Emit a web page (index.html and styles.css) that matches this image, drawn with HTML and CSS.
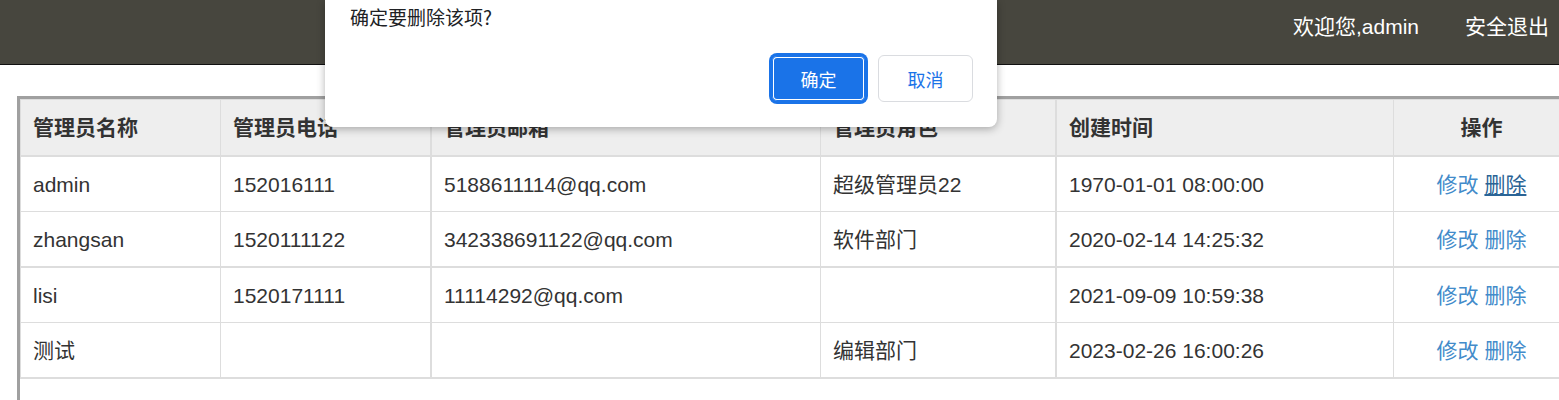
FILE: index.html
```html
<!DOCTYPE html>
<html lang="zh-CN">
<head>
<meta charset="utf-8">
<title>管理员列表</title>
<link rel="stylesheet" href="styles.css">
</head>
<body>
<header class="topbar">
  <span class="welcome">欢迎您,admin</span>
  <a class="logout" href="#">安全退出</a>
</header>

<main class="frame">
  <table class="grid">
    <thead>
      <tr>
        <th class="c1">管理员名称</th>
        <th class="c2 thick">管理员电话</th>
        <th class="c3">管理员邮箱</th>
        <th class="c4 thick">管理员角色</th>
        <th class="c5">创建时间</th>
        <th class="c6 center">操作</th>
      </tr>
    </thead>
    <tbody>
      <tr>
        <td>admin</td>
        <td class="thick">152016111</td>
        <td>5188611114@qq.com</td>
        <td class="thick">超级管理员22</td>
        <td>1970-01-01 08:00:00</td>
        <td class="center"><a href="#">修改</a> <a href="#" class="hover">删除</a></td>
      </tr>
      <tr class="heavy">
        <td>zhangsan</td>
        <td class="thick">1520111122</td>
        <td>342338691122@qq.com</td>
        <td class="thick">软件部门</td>
        <td>2020-02-14 14:25:32</td>
        <td class="center"><a href="#">修改</a> <a href="#">删除</a></td>
      </tr>
      <tr>
        <td>lisi</td>
        <td class="thick">1520171111</td>
        <td>11114292@qq.com</td>
        <td class="thick"></td>
        <td>2021-09-09 10:59:38</td>
        <td class="center"><a href="#">修改</a> <a href="#">删除</a></td>
      </tr>
      <tr class="heavy">
        <td>测试</td>
        <td class="thick"></td>
        <td></td>
        <td class="thick">编辑部门</td>
        <td>2023-02-26 16:00:26</td>
        <td class="center"><a href="#">修改</a> <a href="#">删除</a></td>
      </tr>
    </tbody>
  </table>
</main>

<div class="dialog" role="dialog">
  <p class="dialog-msg">确定要删除该项?</p>
  <div class="dialog-actions">
    <button class="btn btn-primary">确定</button>
    <button class="btn btn-secondary">取消</button>
  </div>
</div>
</body>
</html>
```

FILE: styles.css
```css
html {
  overflow: hidden;
}

body {
  margin: 0;
  font-family: "Liberation Sans", "Noto Sans CJK SC", sans-serif;
  color: #333;
  background: #fff;
}

.topbar {
  display: flex;
  justify-content: flex-end;
  align-items: flex-start;
  gap: 46px;
  padding: 15px 10px 0 0;
  height: 49px;
  background: #47463e;
  border-bottom: 1px solid #111;
  font-size: 21px;
  line-height: 24px;
  color: #fff;
}

.topbar .logout {
  color: #fff;
  text-decoration: none;
}

.frame {
  display: block;
  margin: 31px 0 0 17px;
  border-left: 3px solid #a0a0a0;
  border-top: 3px solid #a0a0a0;
  height: 301px;
  width: 1600px;
}

.grid {
  border-collapse: separate;
  border-spacing: 0;
  table-layout: fixed;
  width: 1550px;
  border-left: 1px solid #ddd;
  border-top: 1px solid #ddd;
  font-size: 21px;
  line-height: 30px;
}

.grid th,
.grid td {
  box-sizing: border-box;
  border-right: 1px solid #ddd;
  border-bottom: 1px solid #ddd;
  padding: 13px 12px 11px;
  text-align: left;
  white-space: nowrap;
  overflow: hidden;
}

.grid th {
  background: #eee;
  font-weight: bold;
  padding: 13px 12px 12px;
  border-bottom-width: 2px;
}

.grid .thick {
  border-right-width: 2px;
}

.grid tr.heavy td {
  border-bottom-width: 2px;
}

.grid .c1 { width: 200px; }
.grid .c2 { width: 211px; }
.grid .c3 { width: 389px; }
.grid .c4 { width: 236px; }
.grid .c5 { width: 337px; }
.grid .c6 { width: 176px; }

.grid .center {
  text-align: center;
}

.grid a {
  color: #428bca;
  text-decoration: none;
}

.grid a.hover {
  color: #2a6496;
  text-decoration: underline;
}

.dialog {
  position: absolute;
  left: 325px;
  top: 0;
  width: 672px;
  box-sizing: border-box;
  padding: 5px 24px 25px 25px;
  background: #fff;
  border-radius: 0 0 8px 8px;
  box-shadow: 0 2px 8px rgba(0, 0, 0, 0.3);
  font-family: "Noto Sans CJK SC", "Liberation Sans", sans-serif;
}

.dialog-msg {
  margin: 0;
  font-size: 19px;
  line-height: 24px;
  color: #202124;
}

.dialog-actions {
  margin-top: 26px;
  display: flex;
  justify-content: flex-end;
  gap: 12px;
}

.btn {
  width: 95px;
  height: 47px;
  border-radius: 6px;
  font-family: "Noto Sans CJK SC", sans-serif;
  font-size: 18px;
  cursor: pointer;
}

.btn-primary {
  background: #1a73e8;
  color: #fff;
  border: 1px solid #1a73e8;
  box-shadow: inset 0 0 0 1px #1a73e8, inset 0 0 0 2px #fff, 0 0 0 2px #1a73e8;
}

.btn-secondary {
  background: #fff;
  color: #1a73e8;
  border: 1px solid #dadce0;
}
```
